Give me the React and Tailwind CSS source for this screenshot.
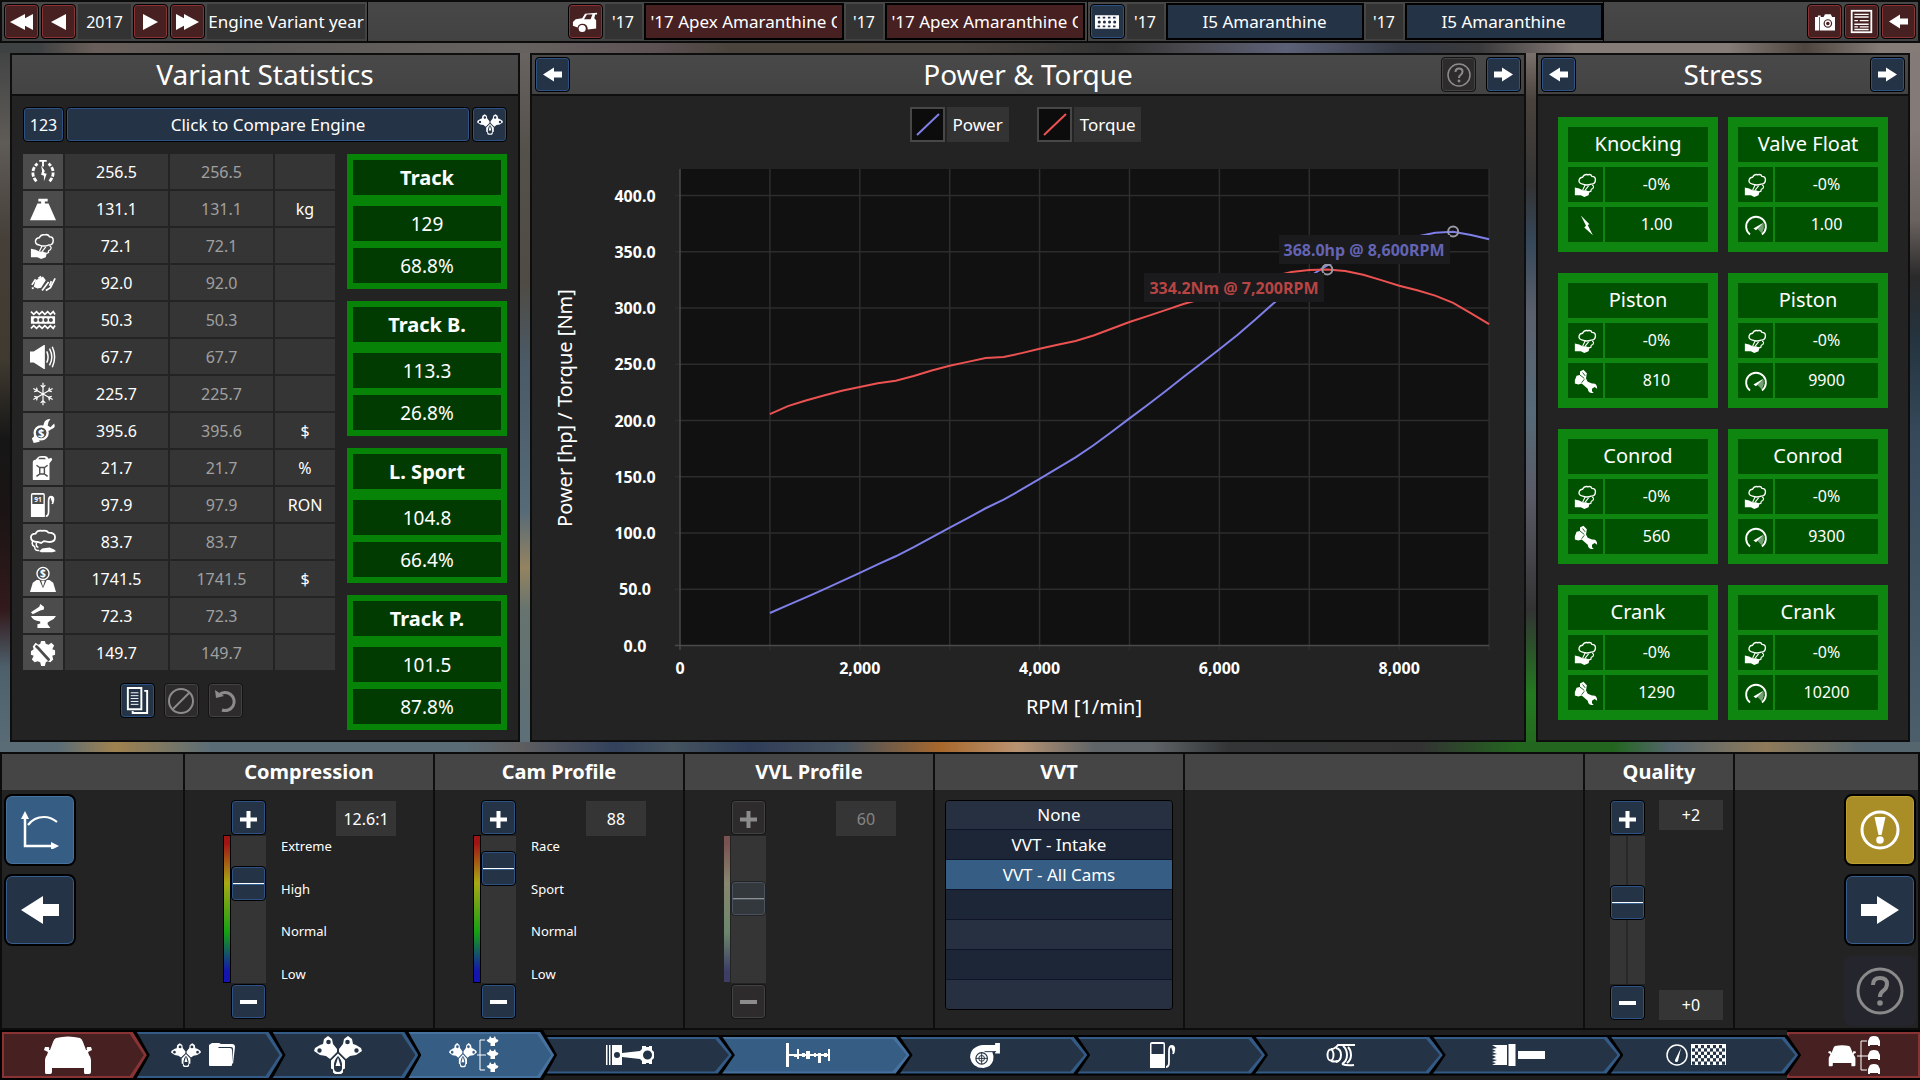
import { useState } from "react";

const BLUE_BTN =
  "flex items-center justify-center rounded border border-black bg-[#243446] shadow-[inset_0_0_0_1px_#2d5283] text-white";
const RED_BTN =
  "flex items-center justify-center rounded border border-black bg-[#472122] shadow-[inset_0_0_0_1px_#8a3334] text-white";
const GRAY_BTN =
  "flex items-center justify-center rounded border border-[#141414] bg-[#2d2b2c] shadow-[inset_0_0_0_1px_#434343] text-[#8c8c8c]";

// blurred garage photo that shows through between the panels
const BACKDROP =
  "[background:linear-gradient(90deg,#3f4242_2%,#6a5f5a_5%,#595755_12%,#66625f_27%,#5d5154_34%,#4b443c_38%,#4a443f_50%,#333_58%,#4a4a50_62%,#5d6178_67%,#333843_73%,#3a3a3c_77%,#857b77_82%,#857b77_90%,#4e463f_94%,#857b77_98%)_top/100%_10px_no-repeat,linear-gradient(90deg,#5a6d77_0,#5a6d77_3%,#a0824f_6%,#5a6d77_11%,#5a6d77_24%,#5f5f60_27%,#33415c_32%,#45545f_35%,#2f3d58_39%,#465360_44%,#a8682c_49%,#b89372_53%,#5f6468_57%,#5f6468_60%,#333536_64%,#333333_74%,#23661f_79%,#23661f_84%,#55666e_87%,#8f7a5a_92%,#55666e_97%)_bottom/100%_10px_no-repeat,linear-gradient(#3f4242_0,#5f5b57_14%,#453f38_28%,#3f392f_45%,#161616_56%,#1b1414_66%,#331a1c_80%,#4d5f6b_88%,#5a6d77_100%)_left/265px_100%_no-repeat,linear-gradient(#6b6563_0,#54504a_15%,#4f4b44_34%,#4a5a66_45%,#566a78_66%,#948360_74%,#66736f_80%,#5c6f78_100%)_265px_0/763px_100%_no-repeat,linear-gradient(#857b77_0,#4a423c_8%,#333_20%,#36485a_28%,#5a5f6c_38%,#566a78_52%,#5a5a66_64%,#333_80%,#237a1f_92%,#23661f_100%)_1028px_0/695px_100%_no-repeat,linear-gradient(#847b78_0,#847b78_12%,#6a625f_25%,#2a2a2a_33%,#243440_42%,#36485a_55%,#4d5f6b_100%)_right/197px_100%_no-repeat]";

const HOLE = (x, y, r) =>
  `M${x - r} ${y}a${r} ${r} 0 1 0 ${2 * r} 0a${r} ${r} 0 1 0 ${-2 * r} 0z`;

function Svg({ box = "0 0 28 28", className = "w-[28px] h-[28px]", children }) {
  return (
    <svg viewBox={box} className={className} fill="currentColor" aria-hidden="true">
      {children}
    </svg>
  );
}

/* ---------- engine / vehicle glyphs ---------- */

function EngineShape() {
  return (
    <g fillRule="evenodd">
      <path
        d={
          "M14 0l4 3 1 5 4 5v3l-7 7-4-3-6-1-6-4 1-3 5-3 3-1 1-5z" +
          HOLE(14.5, 6, 2.3) +
          HOLE(5.5, 14.5, 2.2)
        }
      />
      <path
        d={
          "M34 0l-4 3-1 5-4 5v3l7 7 4-3 6-1 6-4-1-3-5-3-3-1-1-5z" +
          HOLE(33.5, 6, 2.3) +
          HOLE(42.5, 14.5, 2.2)
        }
      />
      <path d="M24 17.500l7 7v8l-2 1v3l-2 1.500h-6l-2-1.500v-3l-2-1v-8zM24 20q-4 4-4 9v3q0 4 4 4t4-4v-3q0-5-4-9z" />
      <path d="M24 21.500l2.500 8.500h-5z" />
    </g>
  );
}

function Engine({ className = "w-[48px] h-[38px]" }) {
  return (
    <Svg box="0 0 48 38" className={className}>
      <EngineShape />
    </Svg>
  );
}

function CarShape() {
  return (
    <path d="M14 2Q26 -1 38 2q2 1 3 4l3 8h1q-1-3 1-3h3l1 3-4 2 1 3q2 2 2 5v12q0 2-2 2h-4q-1 0-1-2v-4h-32v4q0 2-2 2H4q-1 0-1-2V24q0-3 2-5l1-3-4-2 1-3h3q2 0 1 3h1l3-8q1-3 3-4z" />
  );
}

function CarFront() {
  return (
    <Svg box="0 0 53 38" className="w-[53px] h-[38px]">
      <CarShape />
    </Svg>
  );
}

function EngineTree() {
  return (
    <Svg box="0 0 50 38" className="w-[50px] h-[38px]">
      <g transform="translate(0 7) scale(.58 .64)">
        <EngineShape />
      </g>
      <path d="M28 19h9M36 4h-5v30h5" fill="none" stroke="currentColor" />
      {[0, 13, 26].map((y) => (
        <path
          key={y}
          transform={`translate(37 ${y})`}
          d="M4 0l1.500 2h2L9 0l1 3 2.500 1-1 2-2.500 1v3H4.500V7L2 6 .5 4 3 3z"
        />
      ))}
    </Svg>
  );
}

function CarTree() {
  return (
    <Svg box="0 0 54 38" className="w-[54px] h-[38px]">
      <g transform="translate(0 9) scale(.58 .56)">
        <CarShape />
      </g>
      <path d="M30 20h11M40 5h-6v29h6" fill="none" stroke="currentColor" />
      {[0, 14, 28].map((y) => (
        <path key={y} d={`M43 ${y + 1}q4-2 8 0l2 4v5h-2v-1h-8v1h-2v-5z`} />
      ))}
    </Svg>
  );
}

function EngineFolder() {
  return (
    <span className="flex items-center gap-2">
      <Engine className="w-[30px] h-[24px]" />
      <Svg box="0 0 26 24" className="w-[26px] h-[24px]">
        <path d="M0 2l3-2h7l2 1h11q3 0 3 3l-2 17-1-1 1-14q0-2-2-2H10l-1 1h12q2 0 2 2v15q0 1-1 1H1q-1 0-1-1z" />
      </Svg>
    </span>
  );
}

function Piston() {
  return (
    <Svg box="0 0 48 20" className="w-[48px] h-[20px]">
      <path
        fillRule="evenodd"
        d={"M0 0h1.500v20h-1.500zM3 0h1.500v20h-1.500zM6 0h10v8l18-2 2-2v-3h4v1h3v-1h3v4l2 2v6l-2 2v4h-3v-1h-3v1h-4v-3l-2-2-18-2v8h-10z" + HOLE(11, 10, 3) + HOLE(41.5, 10, 4.5)}
      />
    </Svg>
  );
}

function Camshaft() {
  return (
    <Svg box="0 0 44 24" className="w-[44px] h-[24px]">
      <path d="M0 0h3v24h-3zM3 11h41v2h-41zM11 6h2v10h-2zM8 11h4v3h-4zM20 8h4v8h-4zM16 10h3v4h-3zM32 10h3v10h-3zM28 10h2v4h-2zM42 6h2v12h-2zM38 10h3v4h-3z" />
    </Svg>
  );
}

function Turbo() {
  return (
    <Svg box="0 0 32 26" className="w-[31px] h-[25px]">
      <path d="M13 2h13V0h5v11h-5V9h-3q2 4 1 9-2 7-10 8Q2 26 0 15 0 4 13 2z" />
      <circle cx="12" cy="16" r="6" fill="none" stroke="#243446" strokeWidth="1.200" />
      <circle cx="12" cy="16" r="3" fill="none" stroke="#243446" />
      <path d="M12 10v12M6 16h12M15 9h12" stroke="#243446" />
    </Svg>
  );
}

function FuelPump({ label }) {
  return (
    <Svg>
      <path
        fillRule="evenodd"
        d="M3 1h11q2 0 2 2v24H1V3q0-2 2-2zM2.500 3v10h12V3z"
      />
      <path
        d="M17 26q3 0 3-5V10q0-5 3-5t2 5l-1 3M23 6l2 6"
        fill="none"
        stroke="currentColor"
        strokeWidth="1.800"
      />
      {label && (
        <text x="8.500" y="10.500" fontSize="7" textAnchor="middle" fontWeight="bold">
          {label}
        </text>
      )}
    </Svg>
  );
}

function Exhaust() {
  return (
    <Svg box="0 0 30 24" className="w-[30px] h-[24px]">
      <g fill="none" stroke="currentColor" strokeWidth="2">
        <ellipse cx="4.500" cy="12" rx="3" ry="5.500" />
        <path d="M5 6q4 0 7-4h17M5 18q4 1 7 0" />
        <path d="M10 5q5 1 5 7t-5 7" />
        <path d="M17 3q4 3 4 9t-5 9M22 4q3 3 3 8t-4 8M16 21q5 2 12 1" />
      </g>
    </Svg>
  );
}

function Brush() {
  return (
    <Svg box="0 0 53 22" className="w-[53px] h-[22px]">
      <path d="M0 1h15v20H0l4-2-4-1 5-2-5-1 4-2-4-2 5-1-5-2 4-1-4-2 5-1zM16.500 0h7v22h-7zM26 7h27v8h-27z" />
    </Svg>
  );
}

function GaugeFlag() {
  const squares = [];
  for (let r = 0; r < 6; r++)
    for (let c = 0; c < 11; c++) if ((r + c) % 2) squares.push([c, r]);
  return (
    <Svg box="0 0 60 24" className="w-[60px] h-[24px]">
      <circle cx="11" cy="12" r="10" fill="none" stroke="currentColor" strokeWidth="1.500" />
      <path d="M15 5l-3 13a1.500 1.500 0 0 1-3-1z" />
      <path d="M25 1h35v21h-35z" />
      {squares.map(([c, r]) => (
        <rect key={`${c}-${r}`} x={26 + c * 3} y={2 + r * 3.3} width="3" height="3.300" fill="#243446" />
      ))}
    </Svg>
  );
}

/* ---------- small icons ---------- */

function Arrow({ left, className = "w-[19px] h-[15px]" }) {
  return (
    <Svg box="0 0 38 28" className={className}>
      <path d={left ? "M0 14L22 0v8h16v12H22v8z" : "M38 14L16 0v8H0v12h16v8z"} />
    </Svg>
  );
}

function Tri({ left, twice }) {
  const d = left ? "M15 0v16L0 8z" : "M0 0v16l15-8z";
  return twice ? (
    <Svg box="0 0 23 16" className="w-[23px] h-[16px]">
      <path d={d} />
      <path d={d} transform="translate(8 0)" />
    </Svg>
  ) : (
    <Svg box="0 0 15 16" className="w-[15px] h-[16px]">
      <path d={d} />
    </Svg>
  );
}

function Question({ className }) {
  return (
    <Svg box="0 0 48 48" className={className}>
      <circle cx="24" cy="24" r="22" fill="none" stroke="currentColor" strokeWidth="3" />
      <path
        d="M17 18q0-7 7-7t7 6q0 4-4 7-3 2-3 6"
        fill="none"
        stroke="currentColor"
        strokeWidth="4"
      />
      <circle cx="24" cy="36" r="2.800" />
    </Svg>
  );
}

const ICONS = {
  response: (
    <Svg>
      <path
        d="M7 24A12.500 12.500 0 0 1 8 5M21 24A12.500 12.500 0 0 0 20 5"
        fill="none"
        stroke="currentColor"
        strokeWidth="3"
        strokeDasharray="4.500 1.500"
      />
      <path d="M10 2h8M14 2v6" stroke="currentColor" strokeWidth="2" />
      <path d="M12 7l4 6-1 2 3 1-3 8v-6l-3-1 1-4z" />
    </Svg>
  ),
  weight: (
    <Svg>
      <path d="M9 3h10v3h-3v2h4l8 18H0L8 8h4V6H9z" />
    </Svg>
  ),
  smooth: (
    <Svg>
      <path
        d="M10 13q-5-1-4-5 1-3 4-3 2-4 6-3 4-1 5 2 4 0 4 4 0 5-5 5-5 2-10 0z"
        fill="none"
        stroke="currentColor"
        strokeWidth="1.600"
      />
      <path
        d="M13 14l-3 6M17 15l-4 5M21 14q3 1 1 4-3 1-2 3-3 2-4 0"
        fill="none"
        stroke="currentColor"
        strokeWidth="1.300"
      />
      <path d="M1 17l5 1 4 2h4l4 2-1 4-5 2-4-2H1z" />
    </Svg>
  ),
  wires: (
    <Svg>
      <path d="M6 11l8-4 3 4-5 8-4 1-4-2z" />
      <path
        d="M6 10l-4 6M13 22l7-9M17 22l5-3 5-10M9 9l3-2M4 19l-2 1M23 12l-2 5"
        fill="none"
        stroke="currentColor"
        strokeWidth="1.800"
      />
    </Svg>
  ),
  vibration: (
    <Svg>
      <path
        d="M1 5l3 3 3-3 3 3 3-3 3 3 3-3 3 3 3-3 2 3M1 23l3-3 3 3 3-3 3 3 3-3 3 3 3-3 3 3 2-3"
        fill="none"
        stroke="currentColor"
        strokeWidth="1.800"
      />
      <path
        fillRule="evenodd"
        d={"M1 10h26v8H1z" + HOLE(6, 14, 2.2) + HOLE(11.5, 14, 2.2) + HOLE(17, 14, 2.2) + HOLE(22.5, 14, 2.2)}
      />
    </Svg>
  ),
  noise: (
    <Svg>
      <path d="M0 8h4l11-7h1v26h-1L4 20H0z" />
      <path
        d="M18 8q3 6 0 12M21 5q5 9 0 18M24 3q5 11 0 22"
        fill="none"
        stroke="currentColor"
        strokeWidth="1.600"
      />
    </Svg>
  ),
  cooling: (
    <Svg>
      <g fill="none" stroke="currentColor" strokeWidth="1.300">
        {[0, 60, 120, 180, 240, 300].map((a) => (
          <path key={a} transform={`rotate(${a} 14 14)`} d="M14 14V2M11.500 4.500l2.500 2.500 2.500-2.500" />
        ))}
      </g>
    </Svg>
  ),
  service: (
    <Svg>
      <path d="M26 6l-4 4-3-2 1-4 2-3q-6 0-7 5l-1 3 6 5 3-2q5-1 3-6zM2 22l2 5 4-1 3-1-6-6z" />
      <circle cx="12" cy="16" r="7" fill="none" stroke="currentColor" strokeWidth="2.500" />
      <text x="12" y="20.500" fontSize="12" fontWeight="bold" textAnchor="middle">
        $
      </text>
    </Svg>
  ),
  economy: (
    <Svg>
      <path fillRule="evenodd" d="M8 3q1-2 4-2h4q3 0 4 3l3-1 1 2-3 4v17q0 1-1 1H4q-1 0-1-1V8q0-3 3-3zM9 4.500h8L16 3h-6z" />
      <path
        d="M7 11l4 3M19 11l-4 3M7 23l4-3M19 23l-4-3M10.500 13.500h5v7h-5z"
        fill="none"
        stroke="#4c4c4c"
        strokeWidth="1.500"
      />
    </Svg>
  ),
  octane: <FuelPump label="91" />,
  emissions: (
    <Svg>
      <path
        d="M8 14q-7 0-7-5 0-4 5-4 2-4 7-3 5-1 7 2 7 0 7 5 0 5-6 5l-6-1-3 2z"
        fill="none"
        stroke="currentColor"
        strokeWidth="1.900"
      />
      <path d="M3 13q-2 4 2 6 0 5 5 4M7 15q-1 4 2 5" fill="none" stroke="currentColor" strokeWidth="1.600" />
      <path d="M10 24l3-3 8-1 5 2 2 2-4 1H12z" />
    </Svg>
  ),
  cost: (
    <Svg>
      <circle cx="14" cy="8" r="6.500" fill="none" stroke="currentColor" strokeWidth="1.500" />
      <text x="14" y="12" fontSize="11" fontWeight="bold" textAnchor="middle">
        $
      </text>
      <path d="M7 15h3l4 9 4-9h3l4 3 3 10H0l3-10z" />
      <path d="M12 16h4l-2 6z" />
    </Svg>
  ),
  material: (
    <Svg>
      <path d="M1 10L10 4l1-3 4 3v3l-4 1-8 4zM1 14h27q-2 4-6 5l-3 2v2l3 4H8v-4l3-1v-2Q3 19 1 14z" />
    </Svg>
  ),
  production: (
    <Svg>
      <path d="M12 1h4l1 3 3 1 3-2 3 3-2 4 3 1v5l-3 1 1 4-3 3-3-1-2 1-1 4h-4l-1-4-3-1-3 1-3-3 2-4-3-1v-4l3-2-1-3 3-4 3 2 2-1z" />
      <path d="M9 9l11 12M7 7l3 3" stroke="#4c4c4c" strokeWidth="3" strokeLinecap="round" />
    </Svg>
  ),
  bolt: (
    <Svg>
      <path d="M8 3l10 10-2 1 6 12-10-9 2-2z" />
    </Svg>
  ),
  gauge: (
    <Svg>
      <path d="M7 25A11.500 11.500 0 1 1 21 25" fill="none" stroke="currentColor" strokeWidth="2.200" />
      <path d="M14 17l9-5v6l-2 6z" opacity=".45" />
      <path d="M11 18l12-7-9 9z" />
    </Svg>
  ),
  wrench: (
    <Svg>
      <path d="M1 13l2-5 4-1V3l4-2 4 4-1 6 2 4 5 2q6-1 6 6l-3-2-3 2v3l2 2q-6 1-7-5l-7-6-4 1-4-1z" />
      <path d="M7 7l5 4M10 4l3 4M12 12l-3 4" stroke="#005200" fill="none" />
    </Svg>
  ),
};

/* ---------- data ---------- */

const STATS = [
  ["response", "256.5", ""],
  ["weight", "131.1", "kg"],
  ["smooth", "72.1", ""],
  ["wires", "92.0", ""],
  ["vibration", "50.3", ""],
  ["noise", "67.7", ""],
  ["cooling", "225.7", ""],
  ["service", "395.6", "$"],
  ["economy", "21.7", "%"],
  ["octane", "97.9", "RON"],
  ["emissions", "83.7", ""],
  ["cost", "1741.5", "$"],
  ["material", "72.3", ""],
  ["production", "149.7", ""],
];

const MARKETS = [
  ["Track", "129", "68.8%"],
  ["Track B.", "113.3", "26.8%"],
  ["L. Sport", "104.8", "66.4%"],
  ["Track P.", "101.5", "87.8%"],
];

const STRESS = [
  ["Knocking", "bolt", "1.00"],
  ["Valve Float", "gauge", "1.00"],
  ["Piston", "wrench", "810"],
  ["Piston", "gauge", "9900"],
  ["Conrod", "wrench", "560"],
  ["Conrod", "gauge", "9300"],
  ["Crank", "wrench", "1290"],
  ["Crank", "gauge", "10200"],
];

// Nm at every 200 rpm, starting from 1000
const TORQUE = [
  205.7, 212.8, 217.8, 222.3, 226.4, 229.7, 233.2, 235.3, 239.5, 244.5, 248.6,
  252.1, 255.5, 256.4, 259.9, 263.7, 267.3, 270.6, 275.6, 281.5, 287.5, 292.8,
  298.1, 303.5, 308, 312.5, 317, 322.5, 328, 332, 333.7, 334.2, 332.8, 329.5,
  324.8, 319.8, 315.7, 311, 304.6, 295.2, 285.7,
];

const px = (rpm) => 148 + rpm * 0.0899;
const py = (val) => 503.5 - val * 1.125;
const torqueLine = TORQUE.map((t, i) => `${px(1000 + i * 200)},${py(t)}`).join(" ");
const powerLine = TORQUE.map((t, i) => {
  const rpm = 1000 + i * 200;
  return `${px(rpm)},${py((t * rpm) / 7121)}`;
}).join(" ");

/* ---------- panels ---------- */

function Panel({ title, left, right, children }) {
  return (
    <section className="flex flex-col border-2 border-[#0e0e0e] bg-[#232323]">
      <header className="grid h-[41px] grid-cols-[1fr_auto_1fr] items-center border-b-2 border-[#0e0e0e] bg-linear-to-b from-[#494949] to-[#434343] px-[3px]">
        <div className="flex">{left}</div>
        <h2 className="pb-[2px] text-[28px] leading-none">{title}</h2>
        <div className="flex justify-end gap-[10px]">{right}</div>
      </header>
      {children}
    </section>
  );
}

function NavButton({ left, label }) {
  return (
    <button aria-label={label} className={`${BLUE_BTN} h-[35px] w-[35px]`}>
      <Arrow left={left} />
    </button>
  );
}

function VariantStatistics() {
  return (
    <Panel title="Variant Statistics">
      <div className="flex gap-[2px] px-[11px] pt-[11px]">
        <button className={`${BLUE_BTN} h-[35px] w-[41px]`}>123</button>
        <button className={`${BLUE_BTN} h-[35px] flex-1 text-[17px]`}>Click to Compare Engine</button>
        <button aria-label="Pick engine" className={`${BLUE_BTN} h-[35px] w-[35px]`}>
          <Engine className="w-[26px] h-[21px]" />
        </button>
      </div>
      <div className="flex justify-between pt-3 pr-[11px] pl-[9px]">
        <div>
          <table className="border-separate border-spacing-x-[2px] border-spacing-y-0">
            <tbody>
              {STATS.map(([icon, value, unit]) => (
                <tr key={icon} className="h-[37px]">
                  <td className="w-[40px] border-b-2 border-[#232323] bg-[#4c4c4c] p-0">
                    <span className="flex justify-center [&_svg]:h-[26px] [&_svg]:w-[26px]">{ICONS[icon]}</span>
                  </td>
                  <td className="w-[103px] border-b-2 border-[#232323] bg-[#353535] p-0 text-center">{value}</td>
                  <td className="w-[103px] border-b-2 border-[#232323] bg-[#353535] p-0 text-center text-[#a0a0a0]">
                    {value}
                  </td>
                  <td className="w-[60px] border-b-2 border-[#232323] bg-[#353535] p-0 text-center">{unit}</td>
                </tr>
              ))}
            </tbody>
          </table>
          <div className="mt-[11px] ml-1 flex justify-center gap-[9px]">
            <button aria-label="Copy" className={`${BLUE_BTN} h-[35px] w-[35px]`}>
              <Svg className="w-[27px] h-[27px]">
                <g fill="none" stroke="currentColor" strokeWidth="2">
                  <path d="M4 1h14v22H4zM21 4h3v23H9v-2" />
                  <path d="M7 6h8M7 9h8M7 12h8M7 15h8M7 18h8" strokeWidth="1" />
                </g>
              </Svg>
            </button>
            <button aria-label="Clear" className={`${GRAY_BTN} h-[35px] w-[35px]`}>
              <Svg>
                <g fill="none" stroke="currentColor" strokeWidth="2">
                  <circle cx="14" cy="14" r="12" />
                  <path d="M6 22l16-16" />
                </g>
              </Svg>
            </button>
            <button aria-label="Undo" className={`${GRAY_BTN} h-[35px] w-[35px]`}>
              <Svg>
                <path d="M8 8a9 9 0 1 1 3 15" fill="none" stroke="currentColor" strokeWidth="3" />
                <path d="M4 3l1 8 8-2z" />
              </Svg>
            </button>
          </div>
        </div>
        <div className="flex w-[160px] flex-col gap-3 text-[19px]">
          {MARKETS.map(([name, score, pct]) => (
            <div key={name} className="flex h-[135px] flex-col bg-[#078407] px-[6px] py-[6px]">
              <h3 className="flex h-[35px] items-center justify-center bg-[#023b02] text-[20px] font-bold">{name}</h3>
              <div className="mt-[11px] flex h-[35px] items-center justify-center bg-[#023b02] pt-[2px]">{score}</div>
              <div className="mt-[7px] flex h-[35px] items-center justify-center bg-[#023b02] pt-[2px]">{pct}</div>
            </div>
          ))}
        </div>
      </div>
    </Panel>
  );
}

function LegendItem({ name, color }) {
  return (
    <li className="flex gap-[2px]">
      <svg viewBox="0 0 35 35" className="h-[35px] w-[35px]" aria-hidden="true">
        <rect x="1" y="1" width="33" height="33" fill="#0c0c0c" stroke="#474747" strokeWidth="2" />
        <path d="M7 28L29 7" stroke={color} strokeWidth="2" />
      </svg>
      <span className="flex h-[35px] items-center bg-[#333] px-[6px] text-[17px]">{name}</span>
    </li>
  );
}

function PowerChart() {
  return (
    <svg viewBox="0 0 992 590" className="w-full" fill="#fff" role="img" aria-label="Power and torque curves">
      <rect x="148" y="27" width="809" height="476" fill="#111" />
      <g stroke="#2d2d2d" strokeWidth="1.500">
        {[1, 2, 3, 4, 5, 6, 7, 8, 9].map((k) => (
          <path key={k} d={`M${px(k * 1000)} 27V508`} />
        ))}
        {[50, 100, 150, 200, 250, 300, 350, 400].map((v) => (
          <path key={v} d={`M143 ${py(v)}H957`} />
        ))}
      </g>
      <path d="M148 27V508M143 503.500H957" stroke="#4a4a4a" strokeWidth="1.500" fill="none" />
      <g fontSize="16" fontWeight="bold" textAnchor="middle">
        {[0, 50, 100, 150, 200, 250, 300, 350, 400].map((v) => (
          <text key={v} x="103" y={py(v) + 6}>
            {v.toFixed(1)}
          </text>
        ))}
        {[0, 2000, 4000, 6000, 8000].map((v) => (
          <text key={v} x={px(v)} y="532">
            {v.toLocaleString("en-US")}
          </text>
        ))}
      </g>
      <g fontSize="20" textAnchor="middle">
        <text x="552" y="572">
          RPM [1/min]
        </text>
        <text transform="translate(40 266) rotate(-90)">Power [hp] / Torque [Nm]</text>
      </g>
      <polyline points={powerLine} fill="none" stroke="#7f7fea" strokeWidth="2" />
      <polyline points={torqueLine} fill="none" stroke="#ec5252" strokeWidth="2" />
      <g fill="none" stroke="#9a9aa4" strokeWidth="2">
        <circle cx={px(8600)} cy={py(368)} r="5" />
        <circle cx={px(7200)} cy={py(334.2)} r="5" />
      </g>
      <g fontSize="16" fontWeight="bold" textAnchor="middle">
        <rect x="747" y="93" width="171" height="29" fill="#1b1b1d" />
        <text x="832" y="114" fill="#6464b4">
          368.0hp @ 8,600RPM
        </text>
        <rect x="612" y="131" width="180" height="29" fill="#1b1b1d" />
        <text x="702" y="152" fill="#b84444">
          334.2Nm @ 7,200RPM
        </text>
      </g>
    </svg>
  );
}

function PowerTorque() {
  return (
    <Panel
      title="Power & Torque"
      left={<NavButton left label="Previous graph" />}
      right={
        <>
          <button aria-label="Help" className={`${GRAY_BTN} h-[35px] w-[35px]`}>
            <Question className="w-[24px] h-[24px]" />
          </button>
          <NavButton label="Next graph" />
        </>
      }
    >
      <ul className="flex justify-center gap-7 pt-[11px] pr-[5px]">
        <LegendItem name="Power" color="#7f7fea" />
        <LegendItem name="Torque" color="#ec5252" />
      </ul>
      <PowerChart />
    </Panel>
  );
}

function Stress() {
  return (
    <Panel
      title="Stress"
      left={<NavButton left label="Previous panel" />}
      right={<NavButton label="Next panel" />}
    >
      <div className="grid grid-cols-2 gap-x-[10px] gap-y-[21px] px-5 pt-[21px] [&_svg]:h-[24px] [&_svg]:w-[24px]">
        {STRESS.map(([name, icon, value], i) => (
          <div key={i} className="flex flex-col gap-[5px] bg-[#0f860f] p-[10px]">
            <h3 className="flex h-[35px] items-center justify-center bg-[#005200] pb-[2px] text-[20px]">{name}</h3>
            <div className="flex h-[35px] gap-[2px]">
              <span className="flex w-[35px] items-center justify-center bg-[#005200]">{ICONS.smooth}</span>
              <span className="flex flex-1 items-center justify-center bg-[#005200] pb-[2px]">-0%</span>
            </div>
            <div className="flex h-[35px] gap-[2px]">
              <span className="flex w-[35px] items-center justify-center bg-[#005200]">{ICONS[icon]}</span>
              <span className="flex flex-1 items-center justify-center bg-[#005200] pb-[2px]">{value}</span>
            </div>
          </div>
        ))}
      </div>
    </Panel>
  );
}

/* ---------- top bar ---------- */

function YearTag() {
  return <span className="flex h-[35px] w-[37px] items-center justify-center bg-[#333]">'17</span>;
}

function CarName() {
  return (
    <button className="h-[37px] w-[200px] border-2 border-black bg-[#472122] px-[5px] text-[17px]">
      <span className="block overflow-hidden text-left whitespace-nowrap">'17 Apex Amaranthine C</span>
    </button>
  );
}

function EngineName() {
  return (
    <button className="h-[37px] w-[198px] border-2 border-black bg-[#243446] text-[17px]">
      I5 Amaranthine
    </button>
  );
}

function TopBar() {
  return (
    <header className="flex h-[43px] items-center justify-between border-2 border-[#0c0c0c] bg-linear-to-b from-[#484848] to-[#424242] px-[2px]">
      <div className="flex h-full items-center gap-[2px] border-r border-black pr-[2px]">
        <button aria-label="Back ten years" className={`${RED_BTN} h-[35px] w-[35px]`}>
          <Tri left twice />
        </button>
        <button aria-label="Back one year" className={`${RED_BTN} h-[35px] w-[35px]`}>
          <Tri left />
        </button>
        <span className="flex h-[35px] w-[53px] items-center justify-center bg-[#333]">2017</span>
        <button aria-label="Forward one year" className={`${RED_BTN} h-[35px] w-[35px]`}>
          <Tri />
        </button>
        <button aria-label="Forward ten years" className={`${RED_BTN} h-[35px] w-[35px]`}>
          <Tri twice />
        </button>
        <span className="flex h-[35px] w-[158px] items-center justify-center bg-[#333] text-[17px] whitespace-nowrap">
          Engine Variant year
        </span>
      </div>
      <div className="mr-1 flex h-full">
        <div className="flex h-full items-center gap-[2px] border-r border-black pr-[2px]">
          <button aria-label="Car" className={`${RED_BTN} h-[35px] w-[35px]`}>
            <Svg className="w-[26px] h-[26px]">
              <path d="M11 10l3-5 13-1v2h-2l-1 4 2 2v9l-9 1q0-6-6-6-4 0-5 4l-5-2v-4l3-3z" />
              <path d="M13 11l3-5h6l-2 5z" fill="#472122" />
              <circle cx="11" cy="21" r="3.800" />
            </Svg>
          </button>
          <YearTag />
          <CarName />
          <YearTag />
          <CarName />
        </div>
        <div className="flex h-full items-center gap-[2px] border-r border-black pl-[2px]">
          <button aria-label="Engine" className={`${BLUE_BTN} h-[35px] w-[35px]`}>
            <Svg className="w-[24px] h-[24px]">
              <path
                fillRule="evenodd"
                d={
                  "M0 6h28v16H0z" +
                  HOLE(5, 14, 1.8) + HOLE(11, 14, 1.8) + HOLE(17, 14, 1.8) + HOLE(23, 14, 1.8) +
                  "M3 8h3v2h-3zM9 8h3v2h-3zM15 8h3v2h-3zM21 8h3v2h-3zM3 18h3v2h-3zM9 18h3v2h-3zM15 18h3v2h-3zM21 18h3v2h-3z"
                }
              />
            </Svg>
          </button>
          <YearTag />
          <EngineName />
          <YearTag />
          <EngineName />
        </div>
      </div>
      <div className="flex gap-[2px]">
        <button aria-label="Screenshot" className={`${RED_BTN} h-[35px] w-[35px]`}>
          <Svg className="w-[20px] h-[20px]">
            <path fillRule="evenodd" d={"M0 7h4V5h4v2h4l2-4h8l2 4h4v19H0zM6 7v19h1V7z" + HOLE(18, 16, 6)} />
            <path fillRule="evenodd" d={HOLE(18, 16, 4.3) + HOLE(18, 16, 2.5)} />
          </Svg>
        </button>
        <button aria-label="Details" className={`${RED_BTN} h-[35px] w-[35px]`}>
          <Svg className="w-[25px] h-[25px]">
            <g fill="none" stroke="currentColor" strokeWidth="2">
              <rect x="3" y="2" width="22" height="24" />
              <path d="M6 6h16M6 9h16M6 13h4M12 13h10M6 17h16M6 20h4M12 20h10M6 23h16" strokeWidth="1.600" />
            </g>
          </Svg>
        </button>
        <button aria-label="Back" className={`${RED_BTN} h-[35px] w-[35px]`}>
          <Arrow left />
        </button>
      </div>
    </header>
  );
}

/* ---------- bottom controls ---------- */

const RANGE =
  "m-0 block w-[35px] appearance-none [writing-mode:vertical-lr] [direction:rtl] [&::-webkit-slider-thumb]:h-[35px] [&::-webkit-slider-thumb]:w-[35px] [&::-webkit-slider-thumb]:appearance-none [&::-webkit-slider-thumb]:rounded [&::-webkit-slider-thumb]:border [&::-webkit-slider-thumb]:border-black [&::-webkit-slider-thumb]:bg-[linear-gradient(#243446_16px,#ffffff_16px,#ffffff_17px,#35608f_17px,#35608f_18px,#243446_18px)] [&::-webkit-slider-thumb]:shadow-[inset_0_0_0_1px_#2d5283]";

const RANGE_OFF =
  "m-0 block w-[35px] appearance-none [writing-mode:vertical-lr] [direction:rtl] [&::-webkit-slider-thumb]:h-[35px] [&::-webkit-slider-thumb]:w-[35px] [&::-webkit-slider-thumb]:appearance-none [&::-webkit-slider-thumb]:rounded [&::-webkit-slider-thumb]:border [&::-webkit-slider-thumb]:border-[#222] [&::-webkit-slider-thumb]:bg-[linear-gradient(#33383c_16px,#8f8f8f_16px,#8f8f8f_17px,#4a5664_17px,#4a5664_18px,#33383c_18px)] [&::-webkit-slider-thumb]:shadow-[inset_0_0_0_1px_#4a5260]";

function Step({ label, minus, disabled }) {
  return (
    <button
      aria-label={label}
      disabled={disabled}
      className={`${disabled ? GRAY_BTN : BLUE_BTN} h-[35px] w-[35px] ${minus ? "" : "pt-[3px]"}`}
    >
      <Svg box="0 0 17 17" className="w-[17px] h-[17px]">
        <path d={minus ? "M0 7h17v4H0z" : "M0 6.500h6.500V0h4v6.500H17v4h-6.500V17h-4v-6.500H0z"} />
      </Svg>
    </button>
  );
}

function Column({ title, children }) {
  return (
    <section className="flex flex-col border-l-2 border-[#0e0e0e]">
      <h2 className="flex h-9 items-center justify-center bg-[#454545] text-[20px] font-bold">{title}</h2>
      {children}
    </section>
  );
}

function SliderColumn({ title, start, readout, marks = [], disabled }) {
  const [value, setValue] = useState(start);
  return (
    <Column title={title}>
      <div className="flex pt-[10px] pl-[38px]">
        <div
          className={`mt-[35px] h-[148px] w-2 border ${
            disabled
              ? "border-[#232323] bg-[linear-gradient(#7a5252_5%,#87876f_32%,#6c876c_66%,#3d3d66_93%)]"
              : "border-black bg-[linear-gradient(#a01414_5%,#a8a814_32%,#14a014_66%,#1414b0_93%)]"
          }`}
        />
        <div className="flex flex-col gap-px">
          <Step label={`Increase ${title}`} disabled={disabled} />
          <input
            type="range"
            aria-label={title}
            min="0"
            max="100"
            value={value}
            disabled={disabled}
            onChange={(e) => setValue(Number(e.target.value))}
            className={`${disabled ? RANGE_OFF : RANGE} h-[147px] bg-[#353535]`}
          />
          <Step label={`Decrease ${title}`} minus disabled={disabled} />
        </div>
        <ul className="mt-9 ml-[15px] flex h-[149px] w-[55px] flex-col justify-between text-[13px] leading-[21px]">
          {marks.map((m) => (
            <li key={m}>{m}</li>
          ))}
        </ul>
        <output
          className={`mt-px flex h-[35px] w-[60px] items-center justify-center bg-[#353535] ${disabled ? "text-[#858585]" : ""}`}
        >
          {readout}
        </output>
      </div>
    </Column>
  );
}

function VvtColumn() {
  const [picked, setPicked] = useState("VVT - All Cams");
  const rows = ["None", "VVT - Intake", "VVT - All Cams", "", "", "", ""];
  return (
    <Column title="VVT">
      <ul className="mx-[10px] mt-[10px] overflow-hidden rounded border border-black text-[17px]">
        {rows.map((row, i) => (
          <li
            key={i}
            className="h-[30px] border-b border-[#10142a] first:h-[29px] odd:bg-[#273041] even:bg-[#1d2637] last:h-[29px] last:border-b-0"
          >
            {row && (
              <button
                onClick={() => setPicked(row)}
                className={`flex h-full w-full items-center justify-center ${picked === row ? "bg-[#365d83]" : ""}`}
              >
                {row}
              </button>
            )}
          </li>
        ))}
      </ul>
    </Column>
  );
}

function QualityColumn() {
  const [value, setValue] = useState(43);
  return (
    <Column title="Quality">
      <div className="flex justify-between pt-[10px] pr-[10px] pb-[8px] pl-[25px]">
        <div className="flex flex-col gap-px">
          <Step label="Increase Quality" />
          <input
            type="range"
            aria-label="Quality"
            min="0"
            max="100"
            value={100 - value}
            onChange={(e) => setValue(100 - Number(e.target.value))}
            className={`${RANGE} h-[148px] bg-[linear-gradient(90deg,#353535_16px,#282828_16px,#282828_18px,#353535_18px)]`}
          />
          <Step label="Decrease Quality" minus />
        </div>
        <div className="flex w-[64px] flex-col justify-between">
          <output className="flex h-[30px] items-center justify-center bg-[#353535]">+2</output>
          <output className="flex h-[30px] items-center justify-center bg-[#353535]">+0</output>
        </div>
      </div>
    </Column>
  );
}

const BIG = "flex h-[72px] w-[72px] items-center justify-center rounded-lg border-2 border-black";

function Controls() {
  return (
    <div className="grid h-[278px] grid-cols-[181fr_250fr_250fr_250fr_250fr_400fr_150fr_185fr] border-2 border-[#0c0c0c] bg-[#232323]">
      <section>
        <div className="h-9 bg-[#454545]" />
        <div className="flex flex-col gap-2 px-[2px] pt-1">
          <button aria-label="Graph" className={`${BIG} bg-[#365d83] shadow-[inset_0_0_0_1px_#47729d]`}>
            <Svg box="0 0 38 38" className="w-[38px] h-[38px]">
              <path d="M4 6v29h28" fill="none" stroke="currentColor" strokeWidth="2.500" />
              <path d="M4 0l4 8H0zM38 35l-8-4v8z" />
              <path d="M7 14q6-8 16-8 7 0 13 5" fill="none" stroke="currentColor" strokeWidth="2.200" />
            </Svg>
          </button>
          <button aria-label="Previous" className={`${BIG} bg-[#243446] shadow-[inset_0_0_0_1px_#365d8c]`}>
            <Arrow left className="w-[38px] h-[28px]" />
          </button>
        </div>
      </section>
      <SliderColumn
        title="Compression"
        start={73}
        readout="12.6:1"
        marks={["Extreme", "High", "Normal", "Low"]}
      />
      <SliderColumn title="Cam Profile" start={87} readout="88" marks={["Race", "Sport", "Normal", "Low"]} />
      <SliderColumn title="VVL Profile" start={60} readout="60" disabled />
      <VvtColumn />
      <Column title="" />
      <QualityColumn />
      <section className="border-l-2 border-[#0e0e0e]">
        <div className="h-9 bg-[#454545]" />
        <div className="flex flex-col items-end gap-2 px-[2px] pt-1">
          <button aria-label="Warnings" className={`${BIG} bg-[#a98e28] shadow-[inset_0_0_0_1px_#bd9f2f]`}>
            <Svg box="0 0 40 40" className="w-[40px] h-[40px]">
              <circle cx="20" cy="20" r="18" fill="none" stroke="currentColor" strokeWidth="3" />
              <path d="M14.500 7h11l-4 18h-3z" />
              <circle cx="20" cy="30" r="3.800" />
            </Svg>
          </button>
          <button aria-label="Next" className={`${BIG} bg-[#243446] shadow-[inset_0_0_0_1px_#365d8c]`}>
            <Arrow className="w-[38px] h-[28px]" />
          </button>
          <button
            aria-label="Help"
            className="mt-[2px] flex h-[70px] w-[72px] items-center justify-center rounded-lg bg-[#25252e] text-[#8a8a8a]"
          >
            <Question className="w-[48px] h-[48px]" />
          </button>
        </div>
      </section>
    </div>
  );
}

/* ---------- step navigation ---------- */

const CHEVRON = "[clip-path:polygon(0_0,calc(100%_-_14px)_0,100%_50%,calc(100%_-_14px)_100%,0_100%)]";

const STEPS = [
  { label: "Car", icon: <CarFront />, tone: "red", tall: true },
  { label: "Engine family", icon: <EngineFolder />, tall: true },
  { label: "Engine", icon: <Engine />, tall: true },
  { label: "Engine variant", icon: <EngineTree />, tone: "active", tall: true },
  { label: "Bottom end", icon: <Piston /> },
  { label: "Top end", icon: <Camshaft />, tone: "active" },
  { label: "Aspiration", icon: <Turbo /> },
  { label: "Fuel system", icon: <FuelPump /> },
  { label: "Exhaust", icon: <Exhaust /> },
  { label: "Dress-up", icon: <Brush /> },
  { label: "Testing", icon: <GaugeFlag /> },
];

const EDGE = { red: "bg-[#8a3334]", active: "bg-[#47729f]", blue: "bg-[#335b86]" };
const FILL = { red: "bg-[#472122]", active: "bg-[#365d83]", blue: "bg-[#243446]" };

function StepNav() {
  return (
    <nav className="isolate grid h-[50px] grid-cols-[repeat(4,136fr)_repeat(7,178fr)_133fr] items-center bg-[#1e1e1e]">
      {STEPS.map(({ label, icon, tone = "blue", tall }, i) => (
        <button
          key={label}
          aria-label={label}
          style={{ zIndex: 20 - i }}
          className={`relative -mr-[14px] bg-black py-[2px] pr-[3px] ${CHEVRON} ${tall ? "h-[50px]" : "h-[41px]"} ${i ? "" : "pl-[2px]"}`}
        >
          <span className={`block h-full py-[2px] pr-[3px] ${i ? "" : "pl-[2px]"} ${CHEVRON} ${EDGE[tone]}`}>
            <span
              className={`flex h-full items-center justify-center ${tall ? "pr-[10px]" : "pr-3"} ${CHEVRON} ${FILL[tone]}`}
            >
              {icon}
            </span>
          </span>
        </button>
      ))}
      <button aria-label="Trims" className="h-[50px] border-y-2 border-black">
        <span className="flex h-full items-center justify-center border-2 border-[#8a3334] bg-[#472122]">
          <CarTree />
        </span>
      </button>
    </nav>
  );
}

export default function App() {
  return (
    <div className="flex min-h-screen flex-col bg-[#232323] font-['Noto_Sans',sans-serif] text-base text-white">
      <TopBar />
      <main className={`grid flex-1 grid-cols-[510fr_996fr_374fr] gap-[10px] p-[10px] ${BACKDROP}`}>
        <VariantStatistics />
        <PowerTorque />
        <Stress />
      </main>
      <Controls />
      <StepNav />
    </div>
  );
}
